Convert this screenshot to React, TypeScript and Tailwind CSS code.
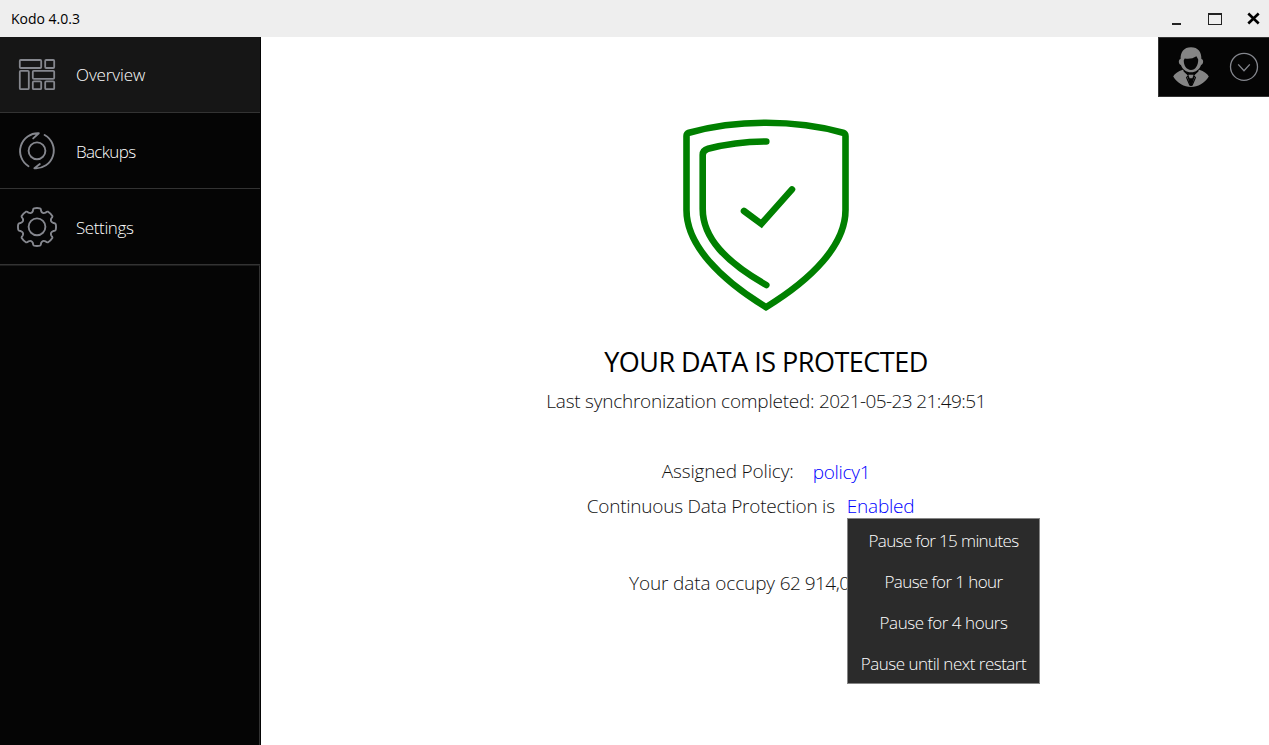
import React from "react";

const line = "#85878e";

const polar = (deg: number, r: number): string => {
  const a = ((deg - 90) * Math.PI) / 180;
  return `${(20 + r * Math.cos(a)).toFixed(2)} ${(20 + r * Math.sin(a)).toFixed(2)}`;
};

const gearPath = (() => {
  let d = "";
  for (let i = 0; i < 8; i++) {
    const c = i * 45;
    d += `${i === 0 ? "M" : "L"}${polar(c - 9, 18.9)}Q${polar(c, 19.4)} ${polar(c + 9, 18.9)}`;
    d += `Q${polar(c + 13, 18.6)} ${polar(c + 14, 16.7)}`;
    d += `Q${polar(c + 22.5, 14)} ${polar(c + 31, 16.7)}`;
    d += `Q${polar(c + 32, 18.6)} ${polar(c + 36, 18.9)}`;
  }
  return d + "Z";
})();

const OverviewIcon = () => (
  <svg width="40" height="40" viewBox="0 0 40 40" fill="none" stroke={line} strokeWidth="1.8">
    <rect x="2.8" y="5" width="21.4" height="8" rx="1" />
    <rect x="28.2" y="5" width="9" height="8" rx="1" />
    <rect x="2.8" y="15.8" width="9" height="18.4" rx="1" />
    <rect x="15.8" y="15.8" width="21.4" height="8" rx="1" />
    <rect x="15.8" y="26.4" width="8.4" height="7.8" rx="1" />
    <rect x="28.2" y="26.4" width="9" height="7.8" rx="1" />
  </svg>
);

const BackupsIcon = () => (
  <svg width="40" height="40" viewBox="0 0 40 40" fill="none" stroke={line} strokeWidth="1.9" strokeLinecap="round" strokeLinejoin="round">
    <circle cx="20" cy="19.8" r="8.4" />
    <path d="M11.5 35.2A17.8 17.8 0 0 1 21.8 2.3L16.2 7.4" />
    <path d="M27.6 4A17.8 17.8 0 0 1 17.4 37.3L22.8 33" />
  </svg>
);

const SettingsIcon = () => (
  <svg width="40" height="40" viewBox="0 0 40 40" fill="none" stroke={line} strokeWidth="1.9" strokeLinejoin="round">
    <circle cx="20" cy="19.8" r="8.4" />
    <path d={gearPath} />
  </svg>
);

const Shield = () => (
  <svg width="168" height="194" viewBox="0 0 168 194" fill="none" stroke="#008000" strokeWidth="6.6" strokeLinecap="round" className="shrink-0">
    <path strokeLinejoin="miter" d="M84 188.2C38 160 4.5 126 4.5 91V17Q4.5 14.5 7 13.7Q43 3.8 84 3.8Q125 3.8 161 13.7Q163.5 14.5 163.5 17V91C163.5 126 130 160 84 188.2Z" />
    <path d="M84.3 22.5Q54 22.5 26 29.8Q20.7 31.3 20.7 36V90C20.7 119 44 143 84.3 166" />
    <path strokeLinejoin="miter" d="M62 92L79.4 104.8L110 70.4" />
  </svg>
);

const UserIcon = () => (
  <svg width="36" height="41" viewBox="0 0 36 41" fill="#858585">
    <path fillRule="evenodd" d="M18 .2C10.8 .2 7.4 5 7.6 12C5.2 12.3 5.3 17.2 7.9 18C9.4 22.5 13.2 25.3 18 25.3C22.8 25.3 26.6 22.5 28.1 18C30.7 17.2 30.8 12.3 28.4 12C28.6 5 25.2 .2 18 .2ZM11.7 11.4C16 12.1 20 11.5 23.4 9.2C24.1 10.5 24.8 11.3 25.2 12.4C25.3 18 22.6 22.9 18 22.9C13.4 22.9 10.5 18 10.8 13.2Z" />
    <path d="M9.8 22.7C12 25.5 14.2 27.4 15.3 28.4L14.8 31L17.1 38.7L18 39.2L18.9 38.7L21.2 31L20.7 28.4C21.8 27.4 24 25.5 26.2 22.7C31 24.5 34.5 26.3 35.8 29.6C31.5 36.5 25 40 18 40C11 40 4.5 36.5 .2 29.6C1.5 26.3 5 24.5 9.8 22.7Z" />
    <path d="M10.8 23.8L15.6 28.2L13.6 30.6L17 38.5M25.2 23.8L20.4 28.2L22.4 30.6L19 38.5" fill="none" stroke="#050505" strokeWidth="1.2" />
    <path d="M15.4 27.8H20.6L19.4 31.3H16.6Z" />
  </svg>
);

const items = [
  { label: "Overview", icon: <OverviewIcon />, style: "bg-[#161616]", text: "tracking-[-0.1px]" },
  { label: "Backups", icon: <BackupsIcon />, style: "bg-[#050505]", text: "pt-[2px] tracking-[-0.65px]" },
  { label: "Settings", icon: <SettingsIcon />, style: "bg-[#050505]", text: "pt-[2px] tracking-[-0.4px]" },
];

const pauses = [
  { label: "Pause for 15 minutes", text: "tracking-[-0.62px]" },
  { label: "Pause for 1 hour", text: "tracking-[-0.6px]" },
  { label: "Pause for 4 hours", text: "tracking-[-0.45px]" },
  { label: "Pause until next restart", text: "tracking-[-0.5px]" },
];

export default function App() {
  return (
    <div className="flex h-[745px] w-[1269px] flex-col overflow-hidden bg-white font-['Open_Sans',sans-serif] font-light text-black">
      <header className="flex h-[37px] shrink-0 items-center justify-between bg-[#eeeeee] pl-[11px] pr-[8px]">
        <span className="text-[14px] font-normal">Kodo 4.0.3</span>
        <svg width="90" height="14" viewBox="0 0 90 14" fill="none" stroke="#222">
          <path d="M1 12H10" strokeWidth="2" />
          <rect x="37.5" y="2.5" width="13" height="10" />
          <path d="M37 2H51" strokeWidth="2" />
          <path d="M77.3 1.5L87.7 11.5M87.7 1.5L77.3 11.5" stroke="#000" strokeWidth="2.6" />
        </svg>
      </header>
      <div className="flex min-h-0 flex-1">
        <aside className="flex w-[261px] shrink-0 flex-col bg-[#050505] text-white">
          <nav className="mr-px">
            {items.map((it) => (
              <div key={it.label} className={`flex h-[76px] items-center gap-[19px] border-b border-[#333333] pl-[17px] ${it.style}`}>
                {it.icon}
                <span className={`whitespace-nowrap text-[17px] ${it.text}`}>{it.label}</span>
              </div>
            ))}
          </nav>
          <div className="mr-px flex-1 border-t border-r border-t-[#1c1c1c] border-r-[#333333]" />
        </aside>
        <main className="relative min-w-0 flex-1">
          <section className="flex flex-col items-center pt-[82px] pl-[2px] text-[19px] leading-7 text-[#111]">
            <Shield />
            <h1 className="mt-[29px] whitespace-nowrap text-[27px] font-normal leading-10 tracking-[-0.5px] text-black">YOUR DATA IS PROTECTED</h1>
            <p className="mt-[5px] whitespace-nowrap tracking-[-0.24px]">
              Last synchronization completed: <span className="tracking-[-0.6px]">2021-05-23 21:49:51</span>
            </p>
            <div className="mt-[42px] flex h-[29px] gap-[19px] whitespace-nowrap tracking-[-0.15px]">
              <span>Assigned Policy:</span>
              <span className="pt-px tracking-[-0.3px] text-[#0000ff]">policy1</span>
            </div>
            <div className="mt-[6px] -ml-[31px] flex gap-[12px] whitespace-nowrap tracking-[-0.23px]">
              <span>Continuous Data Protection is</span>
              <span className="text-[#0000ff]">Enabled</span>
            </div>
            <p className="mt-[49px] w-[274px] whitespace-nowrap tracking-[-0.12px]">
              Your data occupy <span className="tracking-[-0.55px]">62 914,0</span>
            </p>
          </section>
          <div className="absolute top-0 right-0 flex h-[60px] w-[111px] items-center border border-r-0 border-[#333] bg-[#050505] pl-[14px]">
            <UserIcon />
            <svg width="30" height="30" viewBox="0 0 30 30" fill="none" stroke={line} strokeWidth="1.3" className="ml-[20px]">
              <circle cx="15" cy="14.8" r="13.5" />
              <path d="M9.2 12.4L15 18.8L20.8 12.4" />
            </svg>
          </div>
          <div className="absolute top-[481px] left-[586px] flex h-[166px] w-[193px] flex-col border border-[#858585] bg-[#2b2b2b] pt-px text-[17px] text-white">
            {pauses.map((p) => (
              <div key={p.label} className={`flex h-[41px] shrink-0 items-center justify-center whitespace-nowrap ${p.text}`}>{p.label}</div>
            ))}
          </div>
        </main>
      </div>
    </div>
  );
}
